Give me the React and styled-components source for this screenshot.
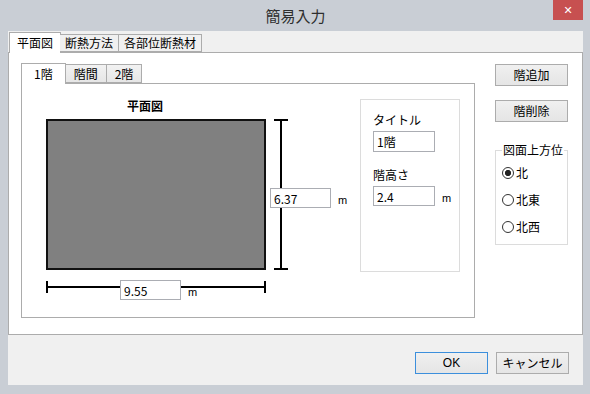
import React from 'react'
import styled, { createGlobalStyle } from 'styled-components'

const GlobalStyle = createGlobalStyle`
    html, body {
        margin: 0;
        padding: 0;
        background: #c9ced5;
    }
    * {
        box-sizing: border-box;
    }
    body {
        font-family: "Noto Sans CJK JP", "Noto Sans", sans-serif;
        font-size: 12px;
        color: #000;
    }
`

const App = () => {
    return (
        <>
            <GlobalStyle />
            <Frame>
                <TitleBar>
                    <span />
                    <Title>簡易入力</Title>
                    <CloseButton>✕</CloseButton>
                </TitleBar>
                <Client>
                    <TabStrip>
                        <Tab $active>平面図</Tab>
                        <Tab>断熱方法</Tab>
                        <Tab>各部位断熱材</Tab>
                    </TabStrip>
                    <TabPanel>
                        <InnerTabs>
                            <InnerStrip>
                                <InnerTab $active>1階</InnerTab>
                                <InnerTab>階間</InnerTab>
                                <InnerTab>2階</InnerTab>
                            </InnerStrip>
                            <InnerPanel>
                                <Drawing>
                                    <DrawingTitle>平面図</DrawingTitle>
                                    <DrawingRow>
                                        <Floor />
                                        <VDim>
                                            <DimField $left="-4px" $top="67px">
                                                <TextBox defaultValue="6.37" $w="61px" />
                                                <Unit>m</Unit>
                                            </DimField>
                                        </VDim>
                                    </DrawingRow>
                                    <HDim>
                                        <DimField $left="72px" $top="-1px">
                                            <TextBox defaultValue="9.55" $w="61px" />
                                            <Unit>m</Unit>
                                        </DimField>
                                    </HDim>
                                </Drawing>
                                <PropBox>
                                    <PropLabel>タイトル</PropLabel>
                                    <TextBox defaultValue="1階" $w="62px" $h="21px" />
                                    <PropLabel $gap="15px">階高さ</PropLabel>
                                    <FieldRow>
                                        <TextBox defaultValue="2.4" $w="62px" />
                                        <Unit>m</Unit>
                                    </FieldRow>
                                </PropBox>
                            </InnerPanel>
                        </InnerTabs>
                        <SideColumn>
                            <Button>階追加</Button>
                            <Button>階削除</Button>
                            <Group>
                                <Legend>図面上方位</Legend>
                                <Radio $checked>北</Radio>
                                <Radio>北東</Radio>
                                <Radio>北西</Radio>
                            </Group>
                        </SideColumn>
                    </TabPanel>
                    <Footer>
                        <Button $default>OK</Button>
                        <Button>キャンセル</Button>
                    </Footer>
                </Client>
            </Frame>
        </>
    )
}

const Frame = styled.div`
    width: 590px;
    height: 394px;
    background: #c9ced5;
    padding: 0 7px 9px 8px;
    display: flex;
    flex-direction: column;
`

const TitleBar = styled.div`
    height: 31px;
    display: grid;
    grid-template-columns: 1fr auto 1fr;
    align-items: start;
`

const Title = styled.div`
    font-size: 15px;
    line-height: 16px;
    margin-top: 8px;
    color: #2e2e2e;
`

const CloseButton = styled.div`
    justify-self: end;
    width: 30px;
    height: 20px;
    background: #c75050;
    color: #fff;
    font-family: "DejaVu Sans", sans-serif;
    font-size: 11px;
    font-weight: bold;
    display: flex;
    align-items: center;
    justify-content: center;
`

const Client = styled.div`
    flex: 1;
    background: #f0f0f0;
    display: flex;
    flex-direction: column;
`

const TabStrip = styled.div`
    height: 21px;
    padding-left: 1px;
    display: flex;
    align-items: flex-end;
    position: relative;
    z-index: 1;
`

const Tab = styled.div`
    height: ${p => (p.$active ? '21px' : '18px')};
    padding: 0 ${p => (p.$active ? '7px' : '5px')};
    margin-right: ${p => (p.$active ? '-1px' : '0')};
    margin-bottom: ${p => (p.$active ? '-1px' : '0')};
    background: ${p => (p.$active ? '#fff' : '#f0f0f0')};
    border: 1px solid #acacac;
    border-bottom: ${p => (p.$active ? 'none' : '1px solid #acacac')};
    line-height: 16px;
    display: flex;
    align-items: center;
    & + & {
        border-left: ${p => (p.$active ? '1px solid #acacac' : 'none')};
    }
`

const TabPanel = styled.div`
    height: 283px;
    background: #fff;
    border: 1px solid #acacac;
    padding: 10px 0 0 12px;
    display: flex;
    gap: 20px;
`

const InnerTabs = styled.div`
    width: 454px;
    display: flex;
    flex-direction: column;
`

const InnerStrip = styled.div`
    height: 20px;
    display: flex;
    align-items: flex-end;
    position: relative;
    z-index: 1;
`

const InnerTab = styled.div`
    height: ${p => (p.$active ? '21px' : '19px')};
    padding: 0 ${p => (p.$active ? '12px' : '8px')};
    margin-bottom: ${p => (p.$active ? '-1px' : '0')};
    background: ${p => (p.$active ? '#fff' : 'linear-gradient(#f2f2f2, #e6e6e6)')};
    border: 1px solid #acacac;
    border-bottom: ${p => (p.$active ? 'none' : '1px solid #acacac')};
    line-height: 16px;
    display: flex;
    align-items: center;
    & + & {
        border-left: none;
    }
`

const InnerPanel = styled.div`
    height: 235px;
    border: 1px solid #acacac;
    background: #fff;
    display: flex;
`

const Drawing = styled.div`
    width: 338px;
    padding-left: 24px;
    display: flex;
    flex-direction: column;
`

const DrawingTitle = styled.div`
    font-weight: bold;
    line-height: 20px;
    padding: 12px 0 0 81px;
    height: 35px;
`

const DrawingRow = styled.div`
    display: flex;
`

const Floor = styled.div`
    width: 220px;
    height: 151px;
    background: #808080;
    border: 2px solid #111;
`

const VDim = styled.div`
    position: relative;
    width: 14px;
    height: 151px;
    margin-left: 8px;
    border-top: 2px solid #000;
    border-bottom: 2px solid #000;
    &::before {
        content: "";
        position: absolute;
        left: 6px;
        top: 0;
        bottom: 0;
        width: 2px;
        background: #000;
    }
`

const HDim = styled.div`
    position: relative;
    width: 220px;
    height: 12px;
    margin-top: 11px;
    border-left: 2px solid #000;
    border-right: 2px solid #000;
    &::before {
        content: "";
        position: absolute;
        left: 0;
        right: 0;
        top: 5px;
        height: 2px;
        background: #000;
    }
`

const DimField = styled.div`
    position: absolute;
    left: ${p => p.$left};
    top: ${p => p.$top};
    display: flex;
    align-items: center;
    gap: 7px;
`

const TextBox = styled.input`
    width: ${p => p.$w};
    height: ${p => p.$h || '20px'};
    border: 1px solid #abadb3;
    background: #fff;
    padding: 0 3px;
    font-family: "Noto Sans CJK JP", "Noto Sans", sans-serif;
    font-size: 12px;
    color: #000;
    outline: none;
`

const Unit = styled.span`
    font-family: "Liberation Sans", sans-serif;
    font-size: 11px;
    line-height: 14px;
    padding-top: 4px;
`

const PropBox = styled.div`
    width: 100px;
    height: 173px;
    margin-top: 15px;
    border: 1px solid #dcdcdc;
    padding: 12px 0 0 12px;
    display: flex;
    flex-direction: column;
    align-items: flex-start;
`

const PropLabel = styled.div`
    line-height: 16px;
    margin: ${p => p.$gap || '0'} 0 3px;
`

const FieldRow = styled.div`
    display: flex;
    align-items: center;
    gap: 7px;
    white-space: nowrap;
`

const SideColumn = styled.div`
    width: 73px;
    padding-top: 1px;
    display: flex;
    flex-direction: column;
    gap: 14px;
`

const Button = styled.div`
    width: 73px;
    height: 22px;
    border: 1px solid ${p => (p.$default ? '#3c8fdc' : '#acacac')};
    background: linear-gradient(#f0f0f0, #e5e5e5);
    display: flex;
    align-items: center;
    justify-content: center;
    line-height: 16px;
    font-family: ${p => (p.$default ? '"Liberation Sans", sans-serif' : 'inherit')};
`

const Group = styled.fieldset`
    margin: 6px 0 0;
    padding: 1px 0 4px 6px;
    border: 1px solid #dcdcdc;
    min-width: 0;
`

const Legend = styled.legend`
    padding: 0 1px;
    line-height: 16px;
    white-space: nowrap;
`

const Radio = styled.div`
    height: 27px;
    display: flex;
    align-items: center;
    gap: 2px;
    &::before {
        content: "";
        width: 12px;
        height: 12px;
        border-radius: 50%;
        border: 1px solid #333;
        box-sizing: border-box;
        background: ${p => (p.$checked ? 'radial-gradient(circle, #222 0 2.8px, #fff 3.3px)' : '#fff')};
    }
`

const Footer = styled.div`
    flex: 1;
    display: flex;
    justify-content: flex-end;
    align-items: flex-start;
    gap: 8px;
    padding: 17px 14px 0 0;
`

export default App
